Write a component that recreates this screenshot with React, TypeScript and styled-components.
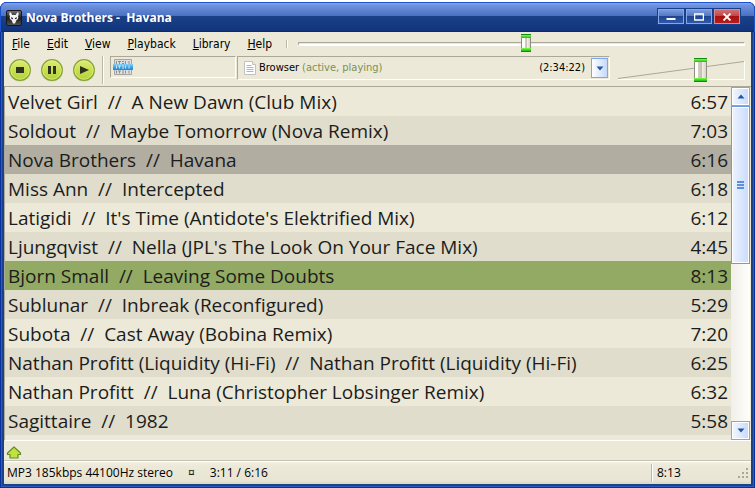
import React from "react";
import styled, { createGlobalStyle, css } from "styled-components";

const UI_FONT = `Tahoma, "DejaVu Sans Condensed", "Noto Sans", sans-serif`;
const LIST_FONT = `"Segoe UI", "Open Sans", "Noto Sans", sans-serif`;

const GlobalStyle = createGlobalStyle`
  *, *::before, *::after { box-sizing: border-box; }
  body { margin: 0; background: #fff; color: #000; font: 12px/16px ${UI_FONT}; }
  button { margin: 0; padding: 0; border: 0; background: none; color: inherit; font: inherit; }
`;

const Frame = styled.div`
  display: flex;
  flex-direction: column;
  height: 100vh;
  padding-top: 2px;
`;

const WindowShell = styled.div`
  flex: 1;
  min-height: 0;
  display: flex;
  flex-direction: column;
  padding: 0 4px 4px;
  border-radius: 7px 7px 0 0;
  background: #1b4189;
  box-shadow: inset 0 0 0 1px #0831a0, inset 0 0 0 2px #2a5cc0;
  overflow: hidden;
`;

const TitleBar = styled.header`
  display: flex;
  align-items: center;
  flex: none;
  height: 30px;
  margin: 0 -4px;
  padding: 0 14px 0 5px;
  gap: 4px;
  border: solid #1c52d0;
  border-width: 1px 1px 0;
  border-radius: 6px 6px 0 0;
  background: linear-gradient(#86a8ee 0, #6f93df 2px, #4a70c0 13px, #1b4189 13px, #12367d 27px, #08286c 29px);
`;

const Title = styled.h1`
  flex: 1;
  margin: 0;
  color: #fff;
  font: 700 12px/16px ${LIST_FONT};
  white-space: pre;
`;

const Captions = styled.div`
  display: flex;
  gap: 2px;
  margin-bottom: 2px;
`;

const CaptionButton = styled.button<{ $close?: boolean }>`
  display: grid;
  place-items: center;
  width: 26px;
  height: 15px;
  border: 1px solid ${(p) => (p.$close ? "#d88a8c" : "#86a6e4")};
  background: ${(p) =>
    p.$close
      ? "linear-gradient(#cf6f70 0, #c24648 6px, #a81010 6px, #b81c1c 13px)"
      : "linear-gradient(#7799dc 0, #5478c2 6px, #1c4490 6px, #3059a8 13px)"};
  outline: 1px solid #16408f;
`;

const Client = styled.main`
  flex: 1;
  min-height: 0;
  display: flex;
  flex-direction: column;
  background: #ece9d8;
`;

const MenuRow = styled.div`
  display: flex;
  align-items: center;
  flex: none;
  height: 24px;
  padding-right: 6px;
`;

const MenuBar = styled.nav`
  display: flex;
  gap: 17px;
  padding: 0 14px 0 8px;
`;

const MenuButton = styled.button`
  &::first-letter { text-decoration: underline; }
`;

const Divider = styled.span<{ $tall?: boolean }>`
  width: 2px;
  height: ${(p) => (p.$tall ? "28px" : "8px")};
  border-left: 1px solid #bab7a8;
  border-right: 1px solid #fff;
`;

const thumbBase = css`
  -webkit-appearance: none;
  border: solid #128a12;
  border-width: 1px 0;
  background:
    linear-gradient(#7dff3c, #1fb81f) top / 100% 3px no-repeat,
    linear-gradient(#7dff3c, #1fb81f) bottom / 100% 3px no-repeat,
    linear-gradient(90deg, #8f8c80 1px, #fff 1px, #fff 4px, #d5d0c4 4px, #c4bfb3 60%, #f0ede4 65%, #d8d4c8 calc(100% - 1px), #8f8c80 calc(100% - 1px));
`;

const Seek = styled.input`
  -webkit-appearance: none;
  flex: 1;
  min-width: 0;
  height: 20px;
  margin: 0 0 0 10px;
  background: none;
  &::-webkit-slider-runnable-track {
    height: 4px;
    border: 1px solid #aca899;
    border-right-color: #fff;
    border-bottom: 2px solid #fff;
  }
  &::-webkit-slider-thumb {
    ${thumbBase}
    width: 10px;
    height: 18px;
    margin-top: -9px;
  }
`;

const Toolbar = styled.div`
  display: flex;
  flex: none;
  height: 30px;
  padding-right: 6px;
`;

const Transport = styled.div`
  display: flex;
  gap: 8px;
  padding: 2px 5px 0 4px;
  margin-right: 1px;
`;

const RoundButton = styled.button`
  width: 24px;
  height: 24px;
  svg { display: block; }
`;

const Sunken = styled.div`
  display: flex;
  align-items: flex-start;
  border: 1px solid #aca899;
  border-right-color: #fff;
  border-bottom-color: #fff;
`;

const ModeBox = styled(Sunken)`
  flex: none;
  width: 126px;
  height: 22px;
  margin: 0 1px 0 6px;
  padding: 2px;
`;

const SourceBox = styled(Sunken)`
  flex: 1;
  align-items: center;
  height: 24px;
  padding: 0 1px 0 5px;
  font-size: 11px;
  gap: 2px;
`;

const State = styled.span`
  flex: 1;
  margin-left: 1px;
  color: #7a9154;
`;

const DropButton = styled.button`
  display: grid;
  place-items: center;
  flex: none;
  width: 17px;
  height: 20px;
  margin-left: 4px;
  border: 1px solid #7da7ea;
  background: linear-gradient(90deg, #fff, #c6d9fb);
`;

const Volume = styled.div`
  flex: none;
  display: grid;
  width: 127px;
  height: 28px;
  margin-left: 8px;
  > * { grid-area: 1 / 1; }
`;

const VolumeInput = styled.input`
  -webkit-appearance: none;
  width: 100%;
  height: 28px;
  margin: 0;
  background: none;
  &::-webkit-slider-thumb {
    ${thumbBase}
    width: 13px;
    height: 24px;
  }
`;

const Playlist = styled.section`
  flex: 1;
  min-height: 0;
  display: flex;
  border-top: 1px solid #aca899;
  border-bottom: 1px solid #fff;
  border-left: 1px solid #aca899;
`;

const TrackPane = styled.div`
  flex: 1;
  min-width: 0;
  overflow: hidden;
`;

const TrackTable = styled.table`
  width: 100%;
  border-collapse: collapse;
  font: 19px/28px ${LIST_FONT};
  color: #1c1c1c;
  white-space: pre;
`;

type RowState = "playing" | "selected" | undefined;

const TrackRow = styled.tr<{ $state: RowState }>`
  height: 29px;
  &:nth-child(even) { background: #e0ddcc; }
  ${(p) => p.$state === "selected" && css`&&& { background: #b1aea1; }`}
  ${(p) => p.$state === "playing" && css`&&& { background: #93aa64; }`}
`;

const TitleCell = styled.td`
  padding: 0 0 0 3px;
`;

const TimeCell = styled.td`
  padding: 0 3px 0 0;
  text-align: right;
`;

const ScrollColumn = styled.div`
  flex: none;
  display: flex;
  flex-direction: column;
  width: 19px;
  margin-right: 1px;
  background: linear-gradient(90deg, #f1efe9, #fefefb);
`;

const ScrollButton = styled.button`
  display: grid;
  place-items: center;
  flex: none;
  height: 19px;
  border: 1px solid #7da7ea;
  box-shadow: inset 0 0 0 1px #fff;
  background: linear-gradient(90deg, #f4f8ff, #c6d9fb);
`;

const ScrollThumb = styled.div`
  display: grid;
  place-items: center;
  flex: 0 0 50%;
  max-height: 158px;
  border: 1px solid #6b9be6;
  box-shadow: inset 0 0 0 1px #fff;
  background: linear-gradient(90deg, #eef4ff, #c9dafc);
`;

const Spacer = styled.div`
  flex: 1;
`;

const UpStrip = styled.div`
  flex: none;
  height: 20px;
  padding: 5px 2px 0;
  border-bottom: 1px solid #c5c2b2;
  button { display: block; width: 16px; height: 14px; }
  svg { display: block; }
`;

const StatusBar = styled.footer`
  flex: none;
  display: flex;
  align-items: center;
  height: 23px;
  padding-left: 3px;
  border-top: 1px solid #fff;
  background: linear-gradient(#f2f0e6, #ece9d8 4px, #e8e5d4 18px, #dbd8c6);
  font: 12px/16px ${LIST_FONT};
  white-space: pre;
`;

const StatusText = styled.span`
  flex: 1;
  display: flex;
  gap: 15px;
`;

const StatusTime = styled.span`
  flex: none;
  display: flex;
  align-items: center;
  justify-content: space-between;
  width: 100px;
  height: 18px;
  padding: 0 2px 0 5px;
  border-left: 1px solid #bab7a8;
  box-shadow: inset 1px 0 0 #fff;
`;

const tracks: { title: string; time: string; state?: RowState }[] = [
  { title: "Velvet Girl  //  A New Dawn (Club Mix)", time: "6:57" },
  { title: "Soldout  //  Maybe Tomorrow (Nova Remix)", time: "7:03" },
  { title: "Nova Brothers  //  Havana", time: "6:16", state: "selected" },
  { title: "Miss Ann  //  Intercepted", time: "6:18" },
  { title: "Latigidi  //  It's Time (Antidote's Elektrified Mix)", time: "6:12" },
  { title: "Ljungqvist  //  Nella (JPL's The Look On Your Face Mix)", time: "4:45" },
  { title: "Bjorn Small  //  Leaving Some Doubts", time: "8:13", state: "playing" },
  { title: "Sublunar  //  Inbreak (Reconfigured)", time: "5:29" },
  { title: "Subota  //  Cast Away (Bobina Remix)", time: "7:20" },
  { title: "Nathan Profitt (Liquidity (Hi-Fi)  //  Nathan Profitt (Liquidity (Hi-Fi)", time: "6:25" },
  { title: "Nathan Profitt  //  Luna (Christopher Lobsinger Remix)", time: "6:32" },
  { title: "Sagittaire  //  1982", time: "5:58" },
];

const AppIcon = () => (
  <svg width="16" height="16" viewBox="0 0 16 16" aria-hidden="true">
    <defs>
      <linearGradient id="app" x2="0" y2="1">
        <stop offset="0" stopColor="#777" />
        <stop offset="0.5" stopColor="#1c1c1c" />
        <stop offset="1" stopColor="#555" />
      </linearGradient>
    </defs>
    <rect x="0.5" y="0.5" width="15" height="15" rx="1.5" fill="url(#app)" stroke="#15181f" />
    <path d="M4 2C3 3.500 3.200 5 4 6.200c-.8 1.600 0 3.300 1.500 3.800L7 13.500h2L10.500 10c1.500-.5 2.300-2.200 1.500-3.800.8-1.200 1-2.700 0-4.200-1 .8-1.800 1.800-2.200 3H6.200C5.800 3.800 5 2.800 4 2z" fill="#f2f2f2" />
    <path d="M5.200 7l2 1.200-.5 1.100-1.400-.6zM10.800 7l-2 1.200.5 1.100 1.400-.6z" fill="#222" />
  </svg>
);

const Disc = ({ children }: { children: React.ReactNode }) => (
  <svg width="24" height="24" viewBox="0 0 24 24" aria-hidden="true">
    <defs>
      <linearGradient id="disc" x2="0" y2="1">
        <stop offset="0" stopColor="#dcec7c" />
        <stop offset="0.5" stopColor="#c9e04c" />
        <stop offset="1" stopColor="#b2d136" />
      </linearGradient>
    </defs>
    <ellipse cx="12" cy="13" rx="11" ry="10.500" fill="#8a8a70" opacity="0.35" />
    <circle cx="12" cy="12" r="10.300" fill="url(#disc)" stroke="#86a530" strokeWidth="1.200" />
    <circle cx="12" cy="12" r="9.200" fill="none" stroke="#e3f194" strokeWidth="0.800" opacity="0.800" />
    {children}
  </svg>
);

const ListIcon = () => (
  <svg width="20" height="16" viewBox="0 0 20 16" aria-hidden="true">
    <defs>
      <linearGradient id="band" x2="0" y2="1">
        <stop offset="0" stopColor="#8fd0f4" />
        <stop offset="0.5" stopColor="#3fa7e6" />
        <stop offset="1" stopColor="#2387cf" />
      </linearGradient>
    </defs>
    <path d="M1.500.5h17v15h-17z" fill="#dedede" stroke="#a5a5a5" />
    <path d="M3.500 2v3M5 2.500h3M6.500 2v3M9 2.500h2M9 4.500h2M12.500 2v3M16 2v3M3.500 11.500v3M5 12h3M6.500 12v2.500M9 12h2M9 14h2M12.500 11.500v3M16 11.500v3" fill="none" stroke="#8f8f8f" />
    <rect x="0" y="5" width="20" height="6" fill="url(#band)" />
    <path d="M3.500 6.500v3M5 7h3M6.500 7v2.500M9 7h2M9 9h2M12.500 6.500v3M16 6.500v3" fill="none" stroke="#c3e7fa" />
  </svg>
);

const PageIcon = () => (
  <svg width="14" height="16" viewBox="0 0 14 16" aria-hidden="true">
    <path d="M1.500 1.500h8l3 3v10h-11z" fill="#fff" stroke="#c0c0c0" />
    <path d="M9.500 1.500v3h3" fill="#eee" stroke="#c0c0c0" />
    <path d="M3.500 5.500h5M3.500 7.500h7M3.500 9.500h7M3.500 11.500h7" stroke="#b4b4b4" />
  </svg>
);

const Arrow = ({ up }: { up?: boolean }) => (
  <svg width="8" height="5" viewBox="0 0 8 5" aria-hidden="true">
    <path d={up ? "M4 .5L7.500 4.500h-7z" : "M.5.5h7L4 4.500z"} fill="#2456a8" />
  </svg>
);

export default function App() {
  return (
    <>
      <GlobalStyle />
      <Frame>
        <WindowShell>
          <TitleBar>
            <AppIcon />
            <Title>{"Nova Brothers -  Havana"}</Title>
            <Captions>
              <CaptionButton aria-label="Minimize">
                <svg width="10" height="9" aria-hidden="true"><path d="M0.500 7h9" stroke="#fff" strokeWidth="2" /></svg>
              </CaptionButton>
              <CaptionButton aria-label="Maximize">
                <svg width="10" height="8" aria-hidden="true"><path d="M.5 1v6h9V1M0 1h10" fill="none" stroke="#fff" strokeWidth="1.500" /></svg>
              </CaptionButton>
              <CaptionButton aria-label="Close" $close>
                <svg width="10" height="8" aria-hidden="true"><path d="M1.500.5l7 7M8.500.5l-7 7" stroke="#fff" strokeWidth="1.800" /></svg>
              </CaptionButton>
            </Captions>
          </TitleBar>
          <Client>
            <MenuRow>
              <MenuBar>
                {["File", "Edit", "View", "Playback", "Library", "Help"].map((name) => (
                  <MenuButton key={name}>{name}</MenuButton>
                ))}
              </MenuBar>
              <Divider />
              <Seek type="range" aria-label="Seek" min={0} max={376} defaultValue={192} />
            </MenuRow>
            <Toolbar>
              <Transport>
                <RoundButton aria-label="Stop">
                  <Disc><path d="M8 9h8v6H8z" fill="#2d3320" /></Disc>
                </RoundButton>
                <RoundButton aria-label="Pause">
                  <Disc><path d="M8 8h3v8H8zM13 8h3v8h-3z" fill="#2d3320" /></Disc>
                </RoundButton>
                <RoundButton aria-label="Play">
                  <Disc><path d="M8 8l9 4-9 4z" fill="#2d3320" /></Disc>
                </RoundButton>
              </Transport>
              <Divider $tall />
              <ModeBox><ListIcon /></ModeBox>
              <SourceBox>
                <PageIcon />
                <span>Browser</span>
                <State>(active, playing)</State>
                <span>(2:34:22)</span>
                <DropButton aria-label="Choose playlist" aria-haspopup="listbox"><Arrow /></DropButton>
              </SourceBox>
              <Volume>
                <svg width="127" height="28" viewBox="0 0 127 28" aria-hidden="true">
                  <path d="M0 23.500h126.500V5" fill="none" stroke="#fff" />
                  <path d="M0 22.500L126 5.500" stroke="#aca899" />
                </svg>
                <VolumeInput type="range" aria-label="Volume" min={0} max={100} defaultValue={67} />
              </Volume>
            </Toolbar>
            <Playlist>
              <TrackPane>
                <TrackTable>
                  <tbody>
                    {tracks.map((t) => (
                      <TrackRow key={t.title} $state={t.state}>
                        <TitleCell>{t.title}</TitleCell>
                        <TimeCell>{t.time}</TimeCell>
                      </TrackRow>
                    ))}
                  </tbody>
                </TrackTable>
              </TrackPane>
              <ScrollColumn>
                <ScrollButton aria-label="Scroll up"><Arrow up /></ScrollButton>
                <ScrollThumb>
                  <svg width="8" height="9" aria-hidden="true">
                    <path d="M0 1h7M0 4h7M0 7h7" stroke="#5c90dc" strokeWidth="2" />
                  </svg>
                </ScrollThumb>
                <Spacer />
                <ScrollButton aria-label="Scroll down"><Arrow /></ScrollButton>
              </ScrollColumn>
            </Playlist>
            <UpStrip>
              <button aria-label="Up">
                <svg width="16" height="14" viewBox="0 0 16 14" aria-hidden="true">
                  <path d="M8 1L14.500 7v1.500H12V12H4V8.500H1.500V7z" fill="#c3e03e" stroke="#5f8f2a" strokeWidth="1.200" strokeLinejoin="round" />
                </svg>
              </button>
            </UpStrip>
            <StatusBar>
              <StatusText>
                <span>MP3 185kbps 44100Hz stereo</span>
                <span>¤</span>
                <span>3:11 / 6:16</span>
              </StatusText>
              <StatusTime>
                8:13
                <svg width="12" height="12" aria-hidden="true">
                  <path d="M1 10h2M5 10h2M9 10h2M5 6h2M9 6h2M9 2h2" stroke="#aaa793" strokeWidth="2" />
                </svg>
              </StatusTime>
            </StatusBar>
          </Client>
        </WindowShell>
      </Frame>
    </>
  );
}
